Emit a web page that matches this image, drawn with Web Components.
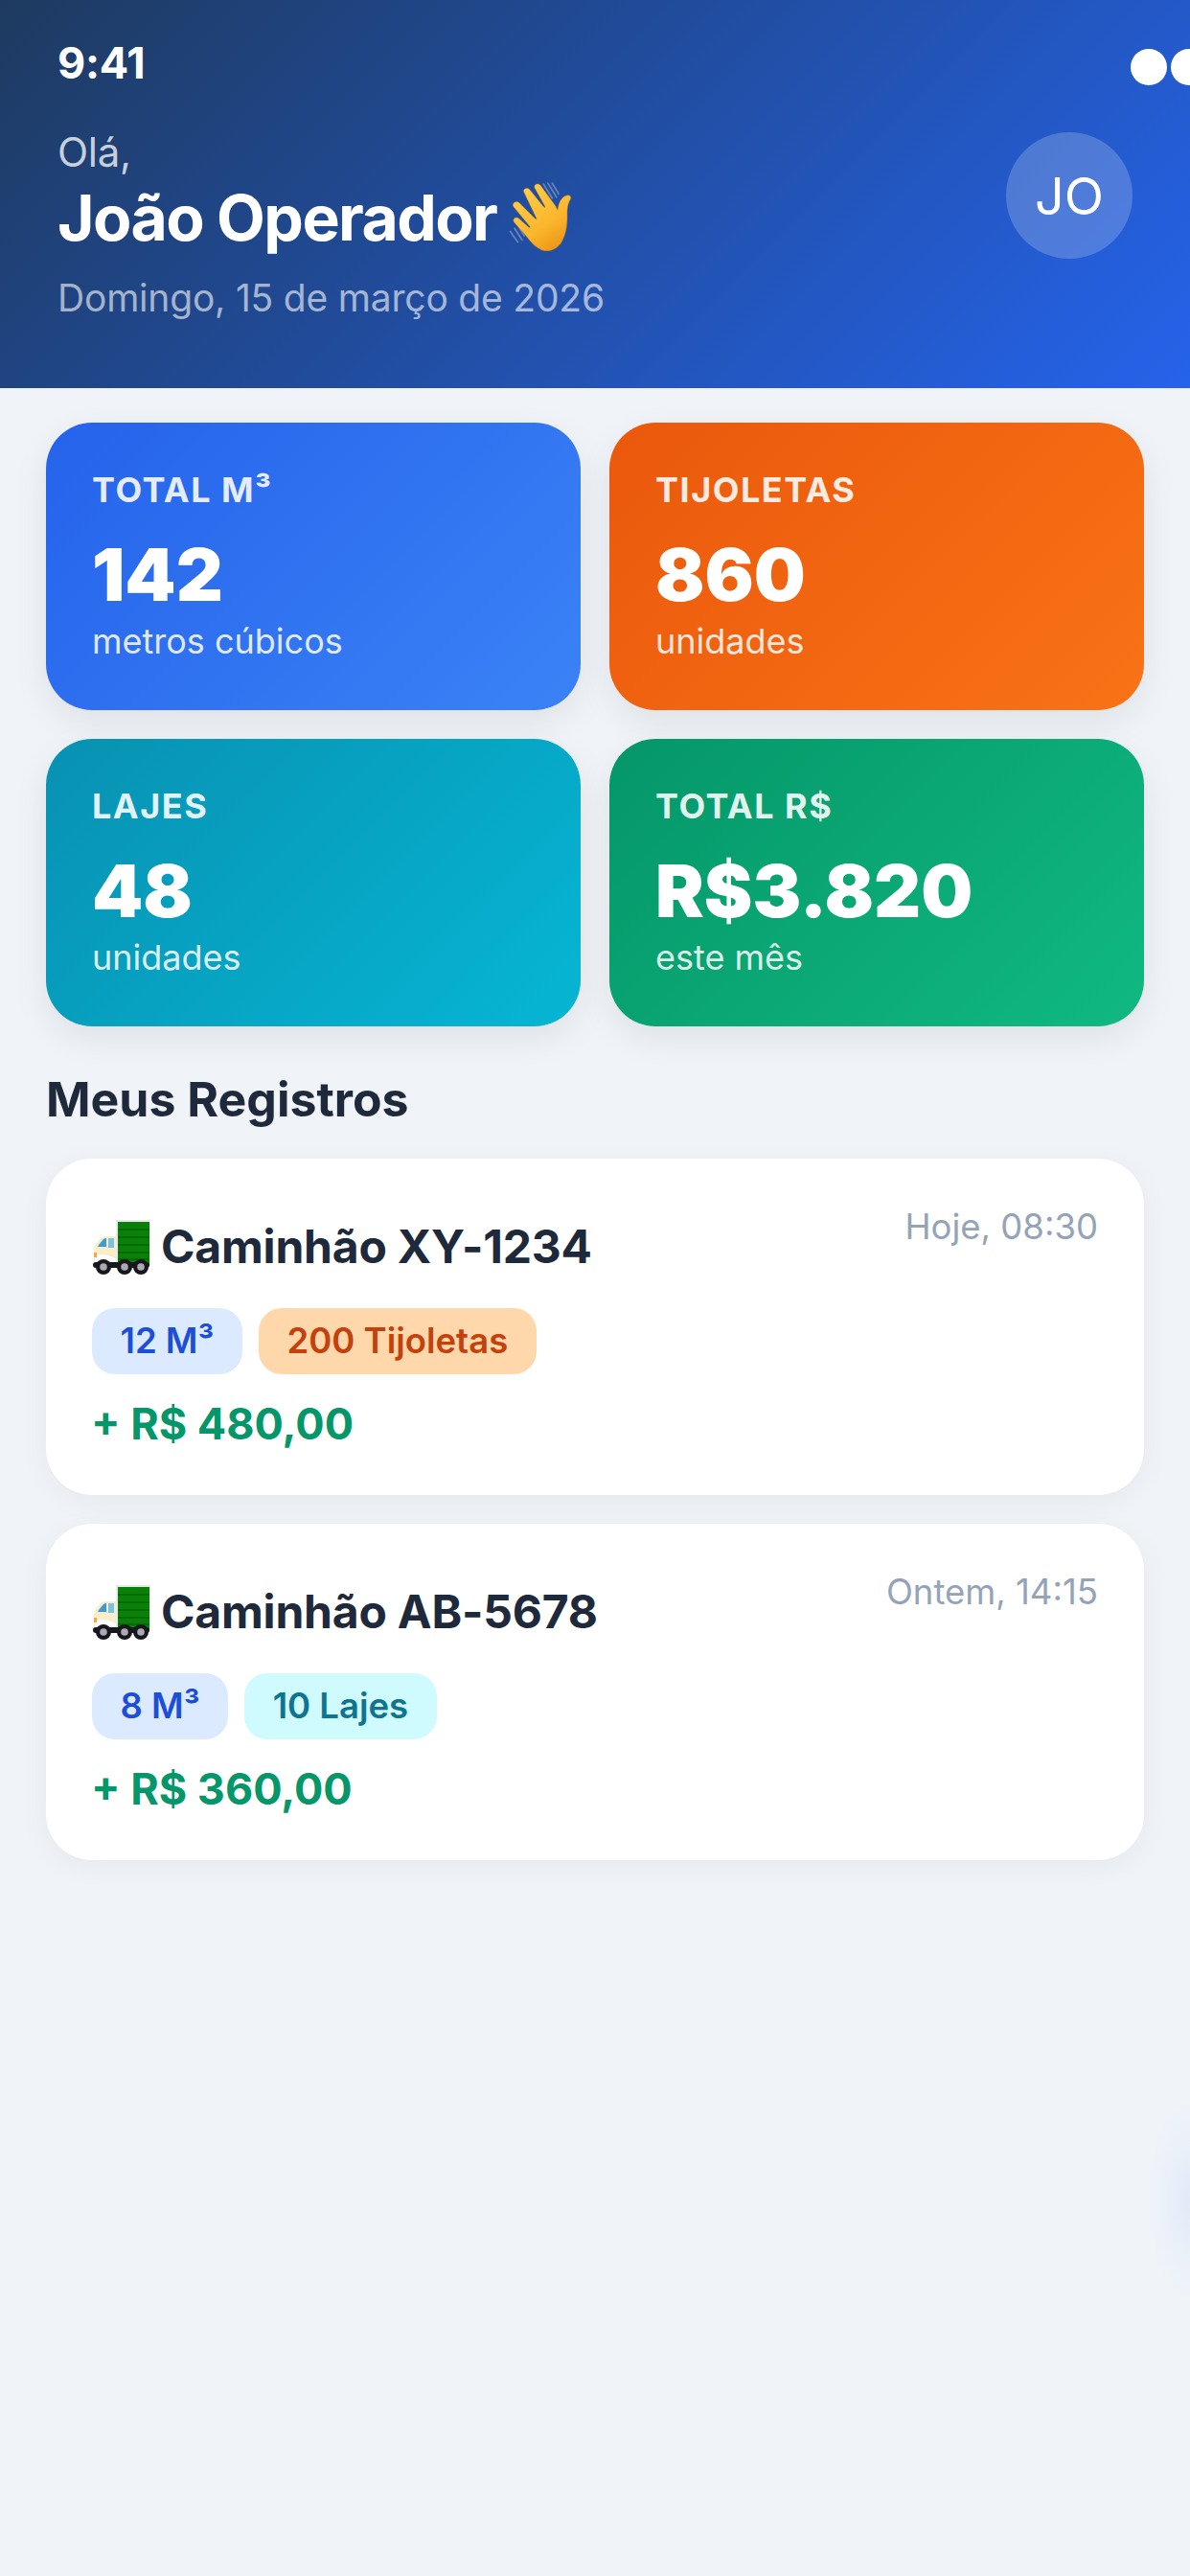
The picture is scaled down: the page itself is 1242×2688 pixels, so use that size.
<!DOCTYPE html>
<html lang="pt-BR"><head><meta charset="utf-8"><title>Meus Registros</title>
<style>
html,body{margin:0;padding:0;background:#f0f4f9;}
body{width:1242px;height:2688px;overflow:hidden;font-family:Inter,"Liberation Sans",sans-serif;position:relative}
</style></head><body>
<app-header></app-header>
<stat-grid>
<stat-card kind="blue" label="TOTAL M³" value="142" sub="metros cúbicos"></stat-card>
<stat-card kind="orange" label="TIJOLETAS" value="860" sub="unidades"></stat-card>
<stat-card kind="cyan" label="LAJES" value="48" sub="unidades"></stat-card>
<stat-card kind="green" label="TOTAL R$" value="R$3.820" sub="este mês"></stat-card>
</stat-grid>
<section-title>Meus Registros</section-title>
<record-list>
<record-card name="Caminhão XY-1234" time="Hoje, 08:30" amount="+ R$ 480,00">
<tag-chip kind="blue">12 M³</tag-chip><tag-chip kind="orange">200 Tijoletas</tag-chip>
</record-card>
<record-card name="Caminhão AB-5678" time="Ontem, 14:15" amount="+ R$ 360,00">
<tag-chip kind="blue">8 M³</tag-chip><tag-chip kind="cyan">10 Lajes</tag-chip>
</record-card>
</record-list>
<fab-glow></fab-glow>
<script>
function def(name,html){
  customElements.define(name,class extends HTMLElement{
    connectedCallback(){
      if(this.shadowRoot)return;
      const r=this.attachShadow({mode:'open'});
      r.innerHTML=typeof html==='function'?html(this):html;
    }
  });
}
const wave=`<svg width="68" height="74" viewBox="0 0 60 66" style="flex:none" aria-hidden="true">
<defs><linearGradient id="h" x1="0" y1="0" x2="0.6" y2="1"><stop offset="0" stop-color="#ffd34f"/><stop offset=".7" stop-color="#fbb62c"/><stop offset="1" stop-color="#ef9a1b"/></linearGradient></defs>
<g stroke="#b9c4d8" stroke-opacity=".45" stroke-width="1.6" fill="none" stroke-linecap="round"><path d="M33 2l8 13M37 1l8 13M41 1l6 10"/><path d="M2 46l7 10M6 43l7 11M10 42l5 8"/></g>
<path fill="url(#h)" stroke="#c9821c" stroke-opacity=".55" stroke-width=".7" d="M15 10c-2-3 2-6 5-3l13 16c1 1 2 1 1-1L25 6c-2-3 2-6 5-3l14 19 2 4c1-5 2-10 7-13 4-2 6 0 5 3-3 5-3 9-3 15 0 9-1 18-6 26-5 7-14 9-20 5-6-3-9-8-14-14L6 38c-3-3 1-7 4-4l9 8c1 1 2 0 1-1L5 23c-2-3 2-6 5-4l15 15c1 1 2 0 1-1z"/></svg>`;
const truck=`<svg width="61" height="59" viewBox="0 0 61 59" style="flex:none" aria-hidden="true">
<path fill="#f8eecb" d="M2 47V33c0-3 1-5 2-7l5-6c1-1 3-2 5-2h12v29z"/>
<path fill="#ffffff" d="M3 38c6-2 15-1 23 4v5H3z"/>
<path fill="#3f9bd0" d="M7 27l5-6c1-1 2-1 3-1v9H6z"/><path fill="#7cc0e2" d="M17 20h6v10h-6z"/>
<rect x="2" y="35" width="3" height="5" fill="#f5a93a"/>
<rect x="25" y="1" width="36" height="47" fill="#ece4f0"/>
<rect x="27" y="3" width="33" height="45" fill="#0a8008"/>
<path stroke="#056405" stroke-width="1.3" d="M27 11h33M27 19h33M27 27h33M27 35h33M27 42h33"/>
<rect x="1" y="45" width="59" height="6" rx="3" fill="#17171c"/>
<g fill="#17171c"><circle cx="12" cy="50" r="8"/><circle cx="34" cy="50" r="8"/><circle cx="51" cy="50" r="8"/></g>
<g fill="#aaaab4"><circle cx="12" cy="50" r="3.8"/><circle cx="34" cy="50" r="3.8"/><circle cx="51" cy="50" r="3.8"/></g>
</svg>`;
def('app-header',`<style>
:host{display:block;height:405px;box-sizing:border-box;background:linear-gradient(135deg,#1e3a5f,#2563eb);color:#fff;overflow:hidden;padding:42px 60px 0}
.st{display:flex;justify-content:space-between;align-items:center;height:48px}
.t{font-size:45px;font-weight:700;line-height:48px;letter-spacing:-.2px}
.dots{display:flex;gap:4px;width:62px;overflow:hidden;margin-right:-60px;margin-top:8px;flex:none}
.dots i{width:38px;height:38px;border-radius:50%;background:#fff;display:block;flex:none}
.main{display:flex;justify-content:space-between;align-items:flex-start;margin-top:43px}
.hi{font-size:42px;line-height:51px;color:rgba(255,255,255,.75);letter-spacing:-.3px}
.name{display:flex;align-items:center;gap:12px;font-size:66px;font-weight:700;line-height:78px;margin-top:4px;letter-spacing:-1.6px}
.date{font-size:39px;line-height:48px;color:rgba(255,255,255,.6);margin-top:21px;letter-spacing:-.2px}
.av{width:132px;height:132px;border-radius:50%;background:rgba(255,255,255,.2);display:flex;align-items:center;justify-content:center;font-size:54px;font-weight:400;flex:none;margin-top:5px}
</style><div class="st"><span class="t">9:41</span><span class="dots"><i></i><i></i></span></div>
<div class="main"><div><div class="hi">Olá,</div><div class="name"><span>João Operador</span>${wave}</div><div class="date">Domingo, 15 de março de 2026</div></div><div class="av">JO</div></div>`);
def('stat-grid',`<style>:host{display:grid;grid-template-columns:1fr 1fr;gap:30px;padding:36px 48px 0}</style><slot></slot>`);
const G={blue:'#2563eb,#3b82f6',orange:'#ea580c,#f97316',cyan:'#0891b2,#06b6d4',green:'#059669,#10b981'};
def('stat-card',e=>`<style>
:host{display:block;height:300px;box-sizing:border-box;padding:48px;border-radius:48px;color:#fff;background:linear-gradient(135deg,${G[e.getAttribute('kind')]});box-shadow:0 12px 36px rgba(0,0,0,.08)}
.l{font-size:36px;font-weight:700;letter-spacing:1.5px;line-height:44px;color:rgba(255,255,255,.9)}
.v{font-size:76px;font-weight:900;line-height:96px;margin-top:18px}
.s{font-size:36px;line-height:44px;color:rgba(255,255,255,.85)}
</style><div class="l">${e.getAttribute('label')}</div><div class="v">${e.getAttribute('value')}</div><div class="s">${e.getAttribute('sub')}</div>`);
def('section-title',`<style>:host{display:block;padding:46px 48px 32px;font-size:50px;font-weight:700;line-height:60px;color:#1e293b}</style><slot></slot>`);
def('record-list',`<style>:host{display:flex;flex-direction:column;gap:30px;padding:0 48px}</style><slot></slot>`);
def('record-card',e=>`<style>
:host{display:block;height:351px;box-sizing:border-box;padding:48px 48px 44px;border-radius:48px;background:#fff;box-shadow:0 6px 30px rgba(0,0,0,.05)}
.top{display:flex;justify-content:space-between;align-items:flex-start}
.nm{display:flex;align-items:center;gap:11px;font-size:48px;font-weight:700;line-height:88px;height:88px;color:#1e293b;letter-spacing:-.2px}
.tm{font-size:36.5px;line-height:46px;color:#94a3b8}
.tags{display:flex;gap:17px;margin-top:20px}
.amt{font-size:45px;font-weight:700;line-height:60px;color:#059669;margin-top:22px;margin-left:-1px}
</style><div class="top"><div class="nm">${truck}<span>${e.getAttribute('name')}</span></div><span class="tm">${e.getAttribute('time')}</span></div>
<div class="tags"><slot></slot></div><div class="amt">${e.getAttribute('amount')}</div>`);
const C={blue:'#dbeafe,#1d4ed8',orange:'#fed7aa,#c2410c',cyan:'#cffafe,#0e7490'};
def('tag-chip',e=>{const[b,c]=C[e.getAttribute('kind')].split(',');return `<style>:host{display:block;height:69px;line-height:69px;padding:0 29.5px;border-radius:24px;font-size:36.5px;font-weight:600;background:${b};color:${c}}</style><slot></slot>`});
def('fab-glow',`<style>:host{display:block;position:absolute;right:0;top:2190px;width:50px;height:210px;background:radial-gradient(ellipse 45px 105px at 100% 50%,rgba(37,99,235,.07),rgba(37,99,235,.025) 60%,transparent)}</style>`);
</script></body></html>
